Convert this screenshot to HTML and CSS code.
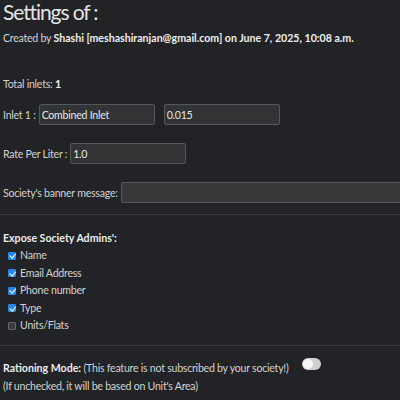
FILE: index.html
```html
<!DOCTYPE html>
<html>
<head>
<meta charset="utf-8">
<link rel="stylesheet" href="styles.css">
</head>
<body>
<div class="page">
  <h1 class="title">Settings of :</h1>
  <p class="meta">Created by <b>Shashi [meshashiranjan@gmail.com] on June 7, 2025, 10:08 a.m.</b></p>
  <p class="total">Total inlets: <b>1</b></p>
  <div class="row inlet">
    <label>Inlet 1 :</label>
    <input class="field" type="text" value="Combined Inlet">
    <input class="field second" type="text" value="0.015">
  </div>
  <div class="row rate">
    <label>Rate Per Liter :</label>
    <input class="field" type="text" value="1.0">
  </div>
  <div class="row banner">
    <label>Society's banner message:</label>
    <input class="field wide" type="text" value="">
  </div>
  <hr class="rule">
  <div class="admins">
    <div class="admins-title">Expose Society Admins':</div>
    <label class="check"><span class="box on"></span>Name</label>
    <label class="check"><span class="box on"></span>Email Address</label>
    <label class="check"><span class="box on"></span>Phone number</label>
    <label class="check"><span class="box on"></span>Type</label>
    <label class="check"><span class="box"></span>Units/Flats</label>
  </div>
  <hr class="rule second-rule">
  <div class="rationing">
    <div class="rat-line"><b>Rationing Mode:</b> (This feature is not subscribed by your society!)<span class="switch"></span></div>
    <div class="rat-note">(If unchecked, it will be based on Unit's Area)</div>
  </div>
</div>
</body>
</html>
```
FILE: styles.css
```css
html, body {
  margin: 0;
  padding: 0;
  background: #222327;
  color: #d2d2d2;
  font-family: Lato, "Open Sans", sans-serif;
  font-size: 10.6px;
  letter-spacing: -0.25px;
  overflow: hidden;
}
b { letter-spacing: 0; }
.page {
  padding: 0 3px;
}
.title {
  margin: 0;
  padding-top: 1px;
  font-size: 21px;
  font-weight: normal;
  line-height: 22px;
  letter-spacing: -1.1px;
  color: #e4e4e4;
}
.meta {
  margin: 8px 0 0;
  line-height: 14px;
  white-space: nowrap;
}
.meta b, .total b { color: #eeeeee; }
.total {
  margin: 32px 0 0;
  line-height: 14px;
}
.row {
  display: flex;
  align-items: center;
  gap: 3px;
}
.row label { white-space: nowrap; }
.inlet { margin-top: 13px; }
.inlet .second { margin-left: 6px; }
.rate { margin-top: 18px; }
.banner { margin-top: 18px; }
.field {
  box-sizing: border-box;
  width: 116px;
  height: 21px;
  background: #323335;
  border: 1px solid #56575a;
  border-radius: 2px;
  color: #e6e6e6;
  font-family: inherit;
  font-size: 10.6px;
  letter-spacing: -0.25px;
  padding: 0 2px;
  margin: 0;
  flex: none;
}
.field.wide { width: 300px; background: #37383a; }
.rule {
  border: 0;
  border-top: 1px solid #3a3b3f;
  margin: 11px -3px 0;
}
.admins { margin-top: 14px; }
.admins-title {
  font-weight: bold;
  line-height: 18px;
  letter-spacing: 0;
  color: #ececec;
}
.check {
  display: flex;
  align-items: center;
  gap: 4px;
  padding-left: 5px;
  line-height: 17.5px;
}
.box {
  box-sizing: border-box;
  width: 8px;
  height: 8px;
  border-radius: 1px;
  background: #3a3b3e;
  border: 1px solid #66676a;
  position: relative;
  flex: none;
}
.box.on {
  background: #2a86e6;
  border-color: #2a86e6;
}
.box.on::after {
  content: "";
  position: absolute;
  left: 1.5px;
  top: -0.5px;
  width: 2.5px;
  height: 4.5px;
  border: solid #fff;
  border-width: 0 1.5px 1.5px 0;
  transform: rotate(40deg);
}
.second-rule { margin-top: 10px; }
.rationing { margin-top: 13px; }
.rat-line {
  line-height: 18px;
  display: flex;
  align-items: center;
  white-space: pre;
}
.rat-line b { color: #ececec; }
.switch {
  display: inline-block;
  margin-left: 13px;
  width: 19px;
  height: 12px;
  border-radius: 6px;
  background: #cfcfcf;
  position: relative;
  margin-top: -7px;
  flex: none;
}
.switch::after {
  content: "";
  position: absolute;
  left: 1px;
  top: 1px;
  width: 10px;
  height: 10px;
  border-radius: 50%;
  background: #f7f7f7;
}
.rat-note { line-height: 18px; }
```
